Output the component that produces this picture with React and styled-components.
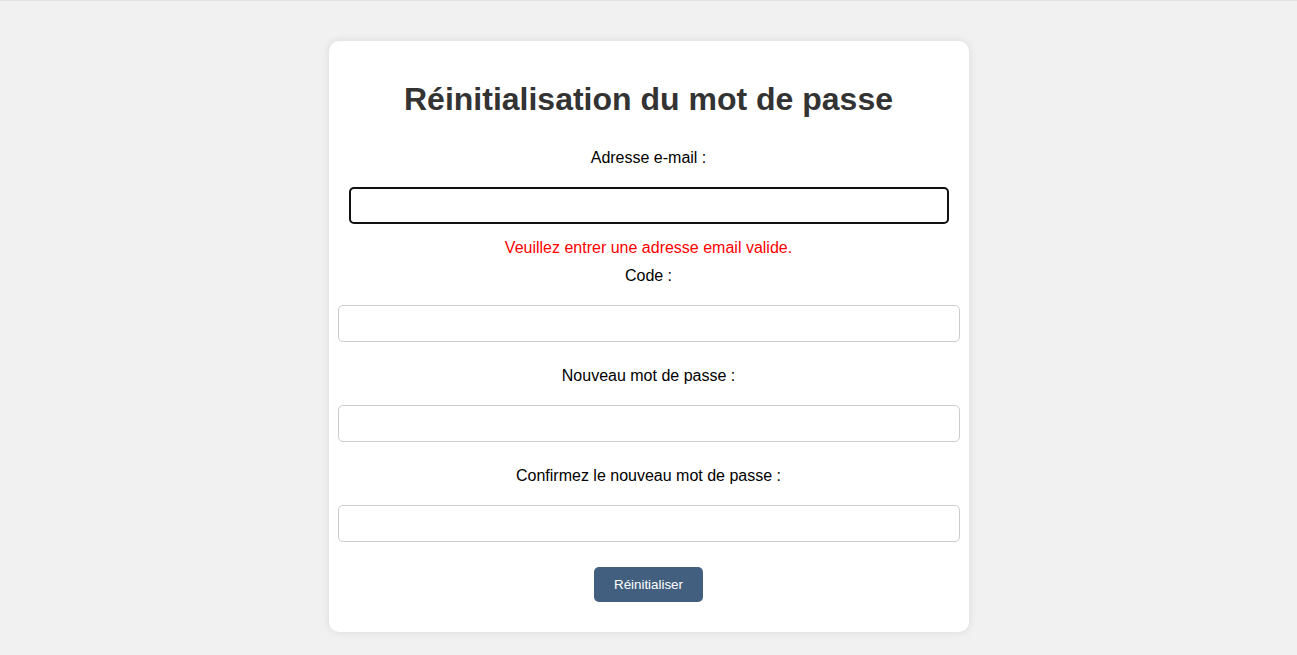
import React from 'react';
import styled, { createGlobalStyle } from 'styled-components';

const GlobalStyle = createGlobalStyle`
  html, body {
    margin: 0;
    background: #f1f1f1;
  }
  body {
    border-top: 1px solid #e4e4e4;
    font-family: "Liberation Sans", Arial, sans-serif;
  }
`;

const Page = styled.div`
  display: flex;
  justify-content: center;
  padding-top: 40px;
  min-height: 654px;
  box-sizing: border-box;
`;

const Card = styled.form`
  width: 640px;
  height: 591px;
  box-sizing: border-box;
  padding: 20px;
  background: #fff;
  border-radius: 10px;
  box-shadow: 0 0 10px rgba(0, 0, 0, 0.1);
  display: flex;
  flex-direction: column;
  align-items: center;
`;

const Title = styled.h1`
  margin: 20px 0 31px;
  font-size: 32px;
  line-height: 37px;
  font-weight: bold;
  color: #333;
`;

const Label = styled.label`
  display: block;
  font-size: 16px;
  line-height: 18px;
  color: #000;
  margin-bottom: 20px;
`;

const Field = styled.input`
  display: block;
  box-sizing: border-box;
  height: 37px;
  flex-shrink: 0;
  margin: 0 -11px ${(p) => p.$gap}px;
  width: 622px;
  padding: 0 10px;
  font-size: 16px;
  font-family: "Liberation Sans", Arial, sans-serif;
  border: 1px solid #ccc;
  border-radius: 5px;
  background: #fff;
  outline: none;
  ${(p) =>
    p.$active &&
    `
    width: 600px;
    margin-left: 0;
    margin-right: 0;
    border: 2px solid #111;
  `}
`;

const ErrorText = styled.p`
  margin: 0 0 10px;
  font-size: 16px;
  line-height: 18px;
  color: #ff0000;
`;

const Button = styled.button`
  padding: 10px 20px;
  font-family: "Liberation Sans", Arial, sans-serif;
  font-size: 13.33px;
  line-height: 15px;
  color: #fff;
  background: #435f80;
  border: none;
  border-radius: 5px;
  cursor: pointer;
`;

const App = () => {
  return (
    <>
      <GlobalStyle />
      <Page>
        <Card onSubmit={(e) => e.preventDefault()}>
          <Title>Réinitialisation du mot de passe</Title>
          <Label htmlFor="email">Adresse e-mail :</Label>
          <Field id="email" type="email" $active $gap={15} autoFocus />
          <ErrorText>Veuillez entrer une adresse email valide.</ErrorText>
          <Label htmlFor="code">Code :</Label>
          <Field id="code" type="text" $gap={25} />
          <Label htmlFor="pwd">Nouveau mot de passe :</Label>
          <Field id="pwd" type="password" $gap={25} />
          <Label htmlFor="pwd2">Confirmez le nouveau mot de passe :</Label>
          <Field id="pwd2" type="password" $gap={25} />
          <Button type="submit">Réinitialiser</Button>
        </Card>
      </Page>
    </>
  );
};

export default App;
